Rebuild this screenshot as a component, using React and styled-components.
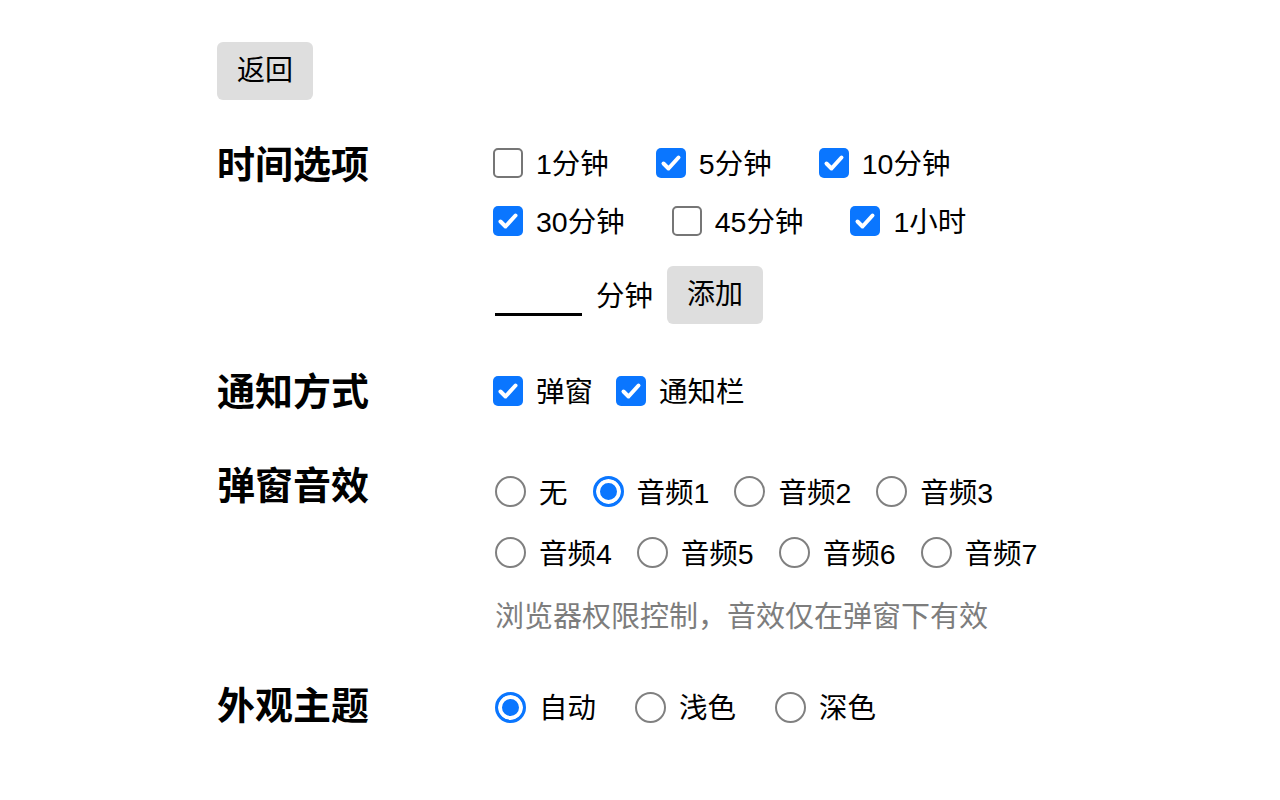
import React, { useState } from 'react';
import styled, { createGlobalStyle } from 'styled-components';

const GlobalStyle = createGlobalStyle`
  html, body {
    margin: 0;
    padding: 0;
    background: #ffffff;
  }
  body {
    font-family: "Liberation Sans", "Noto Sans CJK SC", sans-serif;
    color: #000;
  }
`;

const Page = styled.div`
  width: 846px;
  margin: 0 auto;
  padding-top: 42px;
`;

const GrayButton = styled.button`
  font-family: inherit;
  font-size: 28px;
  line-height: 38px;
  padding: 10px 20px;
  border: none;
  border-radius: 6px;
  background: #dedede;
  color: #000;
  cursor: pointer;
`;

const Section = styled.section`
  display: flex;
  align-items: flex-start;
  margin-top: ${(p) => p.$top}px;
`;

const SectionTitle = styled.h3`
  width: 276px;
  flex-shrink: 0;
  margin: 0;
  padding-top: ${(p) => p.$pad || 0}px;
  font-size: 38px;
  line-height: 58px;
  font-weight: 700;
`;

const Content = styled.div`
  display: flex;
  flex-direction: column;
  padding-top: ${(p) => p.$pad || 0}px;
`;

const OptionRow = styled.div`
  display: flex;
  align-items: center;
  height: ${(p) => p.$h || 58}px;
  gap: ${(p) => p.$gap}px;
`;

const Option = styled.label`
  display: flex;
  align-items: center;
  font-size: 28.5px;
  cursor: pointer;
  white-space: nowrap;
`;

const OptionText = styled.span`
  padding-bottom: 3px;
`;

const CheckBox = styled.input.attrs({ type: 'checkbox' })`
  appearance: none;
  width: 30px;
  height: 30px;
  margin: 0 13px 0 0;
  box-sizing: border-box;
  border: 2px solid #767676;
  border-radius: 5px;
  background: #fff;
  cursor: pointer;

  &:checked {
    border: none;
    background: #0a76ff url("data:image/svg+xml;utf8,<svg xmlns='http://www.w3.org/2000/svg' viewBox='0 0 30 30'><path d='M7.5 15.5l5 5 10-11' fill='none' stroke='white' stroke-width='4' stroke-linecap='round' stroke-linejoin='round'/></svg>") center / 100% 100% no-repeat;
  }
`;

const Radio = styled.input.attrs({ type: 'radio' })`
  appearance: none;
  width: 31px;
  height: 31px;
  margin: 0 13px 0 2px;
  box-sizing: border-box;
  border: 2px solid #808080;
  border-radius: 50%;
  background: #fff;
  cursor: pointer;

  &:checked {
    border: 3px solid #0a76ff;
    background: #0a76ff;
    box-shadow: inset 0 0 0 4px #fff;
  }
`;

const InputRow = styled.div`
  display: flex;
  align-items: center;
  gap: 14px;
  margin-top: 16px;
`;

const MinuteInput = styled.input`
  width: 87px;
  height: 40px;
  margin: 2px 0 0 2px;
  padding: 0;
  border: none;
  border-bottom: 3px solid #000;
  outline: none;
  background: transparent;
  font-family: inherit;
  font-size: 28px;
  box-sizing: border-box;
`;

const Unit = styled.span`
  font-size: 28.5px;
  padding-bottom: 3px;
`;

const Hint = styled.div`
  height: 61px;
  display: flex;
  align-items: center;
  padding-left: 2px;
  font-size: 29px;
  color: #7d7d7d;
`;

const timeOptions = [
  [
    { label: '1分钟', checked: false },
    { label: '5分钟', checked: true },
    { label: '10分钟', checked: true },
  ],
  [
    { label: '30分钟', checked: true },
    { label: '45分钟', checked: false },
    { label: '1小时', checked: true },
  ],
];

const sounds = [
  ['无', '音频1', '音频2', '音频3'],
  ['音频4', '音频5', '音频6', '音频7'],
];

const themes = ['自动', '浅色', '深色'];

const App = () => {
  const [times, setTimes] = useState(timeOptions);
  const [notify, setNotify] = useState({ popup: true, bar: true });
  const [sound, setSound] = useState('音频1');
  const [theme, setTheme] = useState('自动');
  const [minutes, setMinutes] = useState('');

  const toggleTime = (r, i) => {
    setTimes(times.map((row, ri) => row.map((o, oi) => (ri === r && oi === i ? { ...o, checked: !o.checked } : o))));
  };

  return (
    <>
      <GlobalStyle />
      <Page>
        <GrayButton>返回</GrayButton>

        <Section $top={34}>
          <SectionTitle $pad={2}>时间选项</SectionTitle>
          <Content>
            {times.map((row, r) => (
              <OptionRow key={r} $gap={47}>
                {row.map((o, i) => (
                  <Option key={o.label}>
                    <CheckBox checked={o.checked} onChange={() => toggleTime(r, i)} />
                    <OptionText>{o.label}</OptionText>
                  </Option>
                ))}
              </OptionRow>
            ))}
            <InputRow>
              <MinuteInput value={minutes} onChange={(e) => setMinutes(e.target.value)} />
              <Unit>分钟</Unit>
              <GrayButton>添加</GrayButton>
            </InputRow>
          </Content>
        </Section>

        <Section $top={38}>
          <SectionTitle $pad={1}>通知方式</SectionTitle>
          <Content>
            <OptionRow $gap={23}>
              <Option>
                <CheckBox checked={notify.popup} onChange={() => setNotify({ ...notify, popup: !notify.popup })} />
                <OptionText>弹窗</OptionText>
              </Option>
              <Option>
                <CheckBox checked={notify.bar} onChange={() => setNotify({ ...notify, bar: !notify.bar })} />
                <OptionText>通知栏</OptionText>
              </Option>
            </OptionRow>
          </Content>
        </Section>

        <Section $top={36}>
          <SectionTitle>弹窗音效</SectionTitle>
          <Content $pad={4}>
            {sounds.map((row, r) => (
              <OptionRow key={r} $h={61} $gap={23}>
                {row.map((s) => (
                  <Option key={s}>
                    <Radio name="sound" checked={sound === s} onChange={() => setSound(s)} />
                    <OptionText>{s}</OptionText>
                  </Option>
                ))}
              </OptionRow>
            ))}
            <Hint>浏览器权限控制，音效仅在弹窗下有效</Hint>
          </Content>
        </Section>

        <Section $top={33}>
          <SectionTitle>外观主题</SectionTitle>
          <Content $pad={1}>
            <OptionRow $gap={37}>
              {themes.map((t) => (
                <Option key={t}>
                  <Radio name="theme" checked={theme === t} onChange={() => setTheme(t)} />
                  <OptionText>{t}</OptionText>
                </Option>
              ))}
            </OptionRow>
          </Content>
        </Section>
      </Page>
    </>
  );
};

export default App;
